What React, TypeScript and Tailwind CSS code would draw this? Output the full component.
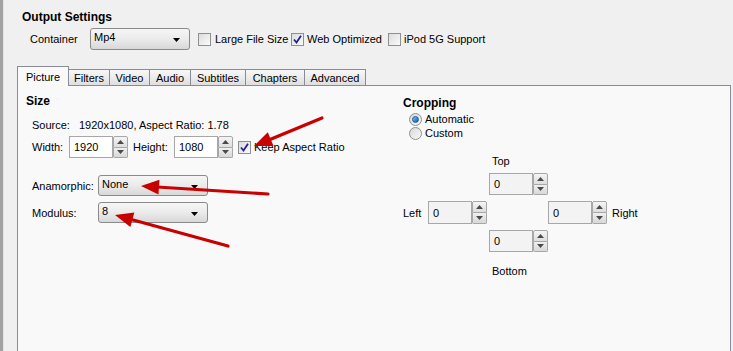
import React from "react";

const F = "font-['Liberation_Sans',Arial,sans-serif]";

function Arrow({ x1, y1, x2, y2 }: { x1: number; y1: number; x2: number; y2: number }) {
  const dx = x2 - x1;
  const dy = y2 - y1;
  const len = Math.hypot(dx, dy);
  const ux = dx / len;
  const uy = dy / len;
  const hl = 18;
  const hw = 7.5;
  const bx = x2 - hl * ux;
  const by = y2 - hl * uy;
  const nx = -uy;
  const ny = ux;
  const pts = `${x2},${y2} ${bx + hw * nx},${by + hw * ny} ${bx - hw * nx},${by - hw * ny}`;
  return (
    <g>
      <line x1={x1} y1={y1} x2={bx + ux * 2} y2={by + uy * 2} stroke="#c80000" strokeWidth={3.2} strokeLinecap="round" />
      <polygon points={pts} fill="#c80000" />
    </g>
  );
}

function DownTri() {
  return (
    <svg width="7" height="4" viewBox="0 0 7 4">
      <polygon points="0,0 7,0 3.5,4" fill="#000" />
    </svg>
  );
}

function Dropdown({ value, w }: { value: string; w: string }) {
  return (
    <div
      className={`${w} h-full shrink-0 rounded-[3px] border border-[#8a8a8a] bg-gradient-to-b from-[#f6f6f6] via-[#ebebeb] to-[#d8d8d8] flex items-start justify-between pl-[3px] pr-[9px] pt-[1px]`}
    >
      <span className="text-[11px] leading-[14px] text-black">{value}</span>
      <div className="self-center pt-[1px]">
        <DownTri />
      </div>
    </div>
  );
}

function Check({ checked }: { checked?: boolean }) {
  return (
    <div className="w-[13px] h-[13px] border border-[#8e8f8f] bg-gradient-to-br from-[#dcdcdc] to-[#fbfbfb] flex items-center justify-center shrink-0">
      {checked && (
        <svg width="9" height="9" viewBox="0 0 9 9">
          <path d="M1 4.5 L3.5 7.5 L8 0.8" stroke="#21219a" strokeWidth="1.8" fill="none" />
        </svg>
      )}
    </div>
  );
}

function Radio({ on }: { on?: boolean }) {
  return (
    <div className="w-[13px] h-[13px] rounded-full border border-[#8f8f8f] bg-gradient-to-br from-[#d8d8d8] to-[#fafafa] flex items-center justify-center shrink-0">
      {on && <div className="w-[7px] h-[7px] rounded-full bg-gradient-to-br from-[#7cc4f2] to-[#0d5ba6] border border-[#1a5f9a]" />}
    </div>
  );
}

function SpinArrow({ up }: { up?: boolean }) {
  return (
    <svg width="7" height="4" viewBox="0 0 7 4">
      <polygon points={up ? "0,4 7,4 3.5,0" : "0,0 7,0 3.5,4"} fill="#4a4a4a" />
    </svg>
  );
}

function Spin({ value, white, h = "h-[22px]" }: { value: string; white?: boolean; h?: string }) {
  return (
    <div className={`flex ${h} shrink-0`}>
      <div
        className={`w-[44px] h-full border border-[#a7a7a7] ${white ? "bg-white" : "bg-[#f3f3f3]"} flex items-center pl-[4px]`}
      >
        <span className="text-[11px] leading-[14px] text-black">{value}</span>
      </div>
      <div className="w-[15px] h-full flex flex-col">
        <div className="flex-1 border border-[#a7a7a7] rounded-t-[2px] bg-gradient-to-b from-[#f5f5f5] to-[#dedede] flex items-center justify-center">
          <SpinArrow up />
        </div>
        <div className="flex-1 border border-t-0 border-[#a7a7a7] rounded-b-[2px] bg-gradient-to-b from-[#f0f0f0] to-[#d8d8d8] flex items-center justify-center">
          <SpinArrow />
        </div>
      </div>
    </div>
  );
}

function Tab({ label, w, active }: { label: string; w: string; active?: boolean }) {
  if (active) {
    return (
      <div
        className={`${w} h-[20px] shrink-0 relative z-10 border border-b-0 border-[#898c95] bg-[#f9f9f9] flex items-start justify-center pt-[3px]`}
      >
        <span className="text-[11px] leading-[14px] text-black">{label}</span>
      </div>
    );
  }
  return (
    <div
      className={`${w} h-[16px] shrink-0 mb-[1px] -ml-[1px] border border-b-0 border-[#898c95] bg-gradient-to-b from-[#f7f7f7] via-[#ececec] to-[#dedede] flex items-center justify-center`}
    >
      <span className="text-[11px] leading-[14px] text-black">{label}</span>
    </div>
  );
}

export default function App() {
  return (
    <div className={`${F} w-[733px] h-[351px] bg-[#f0f0f0] relative overflow-hidden flex text-black`}>
      <div className="w-[3px] h-full shrink-0 bg-[#a2a2a2]" />
      <div className="w-[1px] h-full shrink-0 bg-[#e4e4e4]" />
      <div className="flex-1 flex flex-col">
        <div className="shrink-0 ml-[18px] mt-[10px] text-[12px] font-bold leading-[14px]">Output Settings</div>
        <div className="shrink-0 mt-[4px] h-[22px] flex items-center">
          <div className="ml-[26px] w-[60px] text-[11px] leading-[14px]">Container</div>
          <Dropdown value="Mp4" w="w-[100px]" />
          <div className="ml-[8px] w-[93px] flex items-center gap-[4px]">
            <Check />
            <span className="text-[11px] leading-[14px]">Large File Size</span>
          </div>
          <div className="w-[97px] flex items-center gap-[3px]">
            <Check checked />
            <span className="text-[11px] leading-[14px]">Web Optimized</span>
          </div>
          <div className="flex items-center gap-[3px]">
            <Check />
            <span className="text-[11px] leading-[14px]">iPod 5G Support</span>
          </div>
        </div>
        <div className="shrink-0 mt-[16px] ml-[13px] h-[20px] flex items-end">
          <Tab label="Picture" w="w-[52px]" active />
          <Tab label="Filters" w="w-[42px]" />
          <Tab label="Video" w="w-[41px]" />
          <Tab label="Audio" w="w-[42px]" />
          <Tab label="Subtitles" w="w-[56px]" />
          <Tab label="Chapters" w="w-[60px]" />
          <Tab label="Advanced" w="w-[62px]" />
        </div>
        <div className="shrink-0 -mt-[1px] ml-[13px] w-[714px] h-[300px] border border-[#898c95] bg-[#f9f9f9] flex">
          <div className="w-[385px] pl-[8px] pt-[8px] flex flex-col">
            <div className="text-[12px] font-bold leading-[14px]">Size</div>
            <div className="mt-[10px] pl-[6px] flex text-[11px] leading-[14px]">
              <span className="w-[47px]">Source:</span>
              <span>1920x1080, Aspect Ratio: 1.78</span>
            </div>
            <div className="mt-[4px] pl-[6px] h-[22px] flex items-center text-[11px] leading-[14px]">
              <span className="w-[37px]">Width:</span>
              <Spin value="1920" white />
              <span className="ml-[5px] w-[41px]">Height:</span>
              <Spin value="1080" white />
              <div className="ml-[5px]">
                <Check checked />
              </div>
              <span className="ml-[3px]">Keep Aspect Ratio</span>
            </div>
            <div className="mt-[17px] pl-[6px] h-[21px] flex items-center text-[11px] leading-[14px]">
              <span className="w-[66px]">Anamorphic:</span>
              <Dropdown value="None" w="w-[110px]" />
            </div>
            <div className="mt-[6px] pl-[6px] h-[21px] flex items-center text-[11px] leading-[14px]">
              <span className="w-[66px]">Modulus:</span>
              <Dropdown value="8" w="w-[110px]" />
            </div>
          </div>
          <div className="flex-1 pt-[10px] flex flex-col text-[11px] leading-[14px]">
            <div className="text-[12px] font-bold leading-[14px]">Cropping</div>
            <div className="mt-[2px] pl-[6px] flex items-center gap-[3px]">
              <Radio on />
              <span>Automatic</span>
            </div>
            <div className="pl-[6px] flex items-center gap-[3px]">
              <Radio />
              <span>Custom</span>
            </div>
            <div className="mt-[14px] ml-[89px]">Top</div>
            <div className="mt-[5px] ml-[86px]">
              <Spin value="0" />
            </div>
            <div className="mt-[6px] flex items-center">
              <span className="w-[25px]">Left</span>
              <Spin value="0" h="h-[23px]" />
              <div className="w-[61px]" />
              <Spin value="0" h="h-[23px]" />
              <span className="ml-[5px]">Right</span>
            </div>
            <div className="mt-[6px] ml-[86px]">
              <Spin value="0" />
            </div>
            <div className="mt-[12px] ml-[89px]">Bottom</div>
          </div>
        </div>
      </div>
      <svg className="absolute inset-0 pointer-events-none" width="733" height="351">
        <Arrow x1={322} y1={118} x2={254} y2={146} />
        <Arrow x1={268} y1={194} x2={141} y2={186} />
        <Arrow x1={228} y1={246} x2={115} y2={215} />
      </svg>
    </div>
  );
}
